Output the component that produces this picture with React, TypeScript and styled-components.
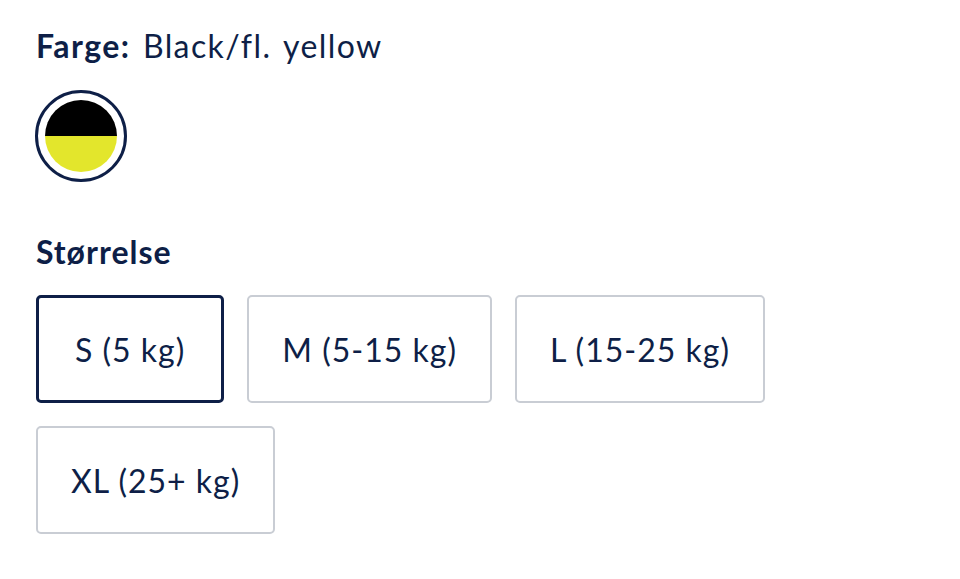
import React, { useState } from 'react'
import styled, { createGlobalStyle } from 'styled-components'

const GlobalStyle = createGlobalStyle`
  html, body {
    margin: 0;
    padding: 0;
    background: #ffffff;
  }

  body {
    font-family: Lato, "Open Sans", sans-serif;
    color: #0e1f47;
  }
`

const Page = styled.div`
  display: flex;
  flex-direction: column;
  padding: 26px 36px 0;
`

const Label = styled.div`
  font-size: 32px;
  letter-spacing: 1.4px;
  line-height: 40px;
  margin: 0;
  word-spacing: 3px;
`

const LabelKey = styled.span`
  font-weight: 700;
`

const Swatches = styled.div`
  display: flex;
  gap: 12px;
  margin-top: 24px;
`

const Swatch = styled.button<{ $selected: boolean; $top: string; $bottom: string }>`
  background: #ffffff;
  border: 3px solid ${props => (props.$selected ? '#0e1f47' : 'transparent')};
  border-radius: 50%;
  cursor: pointer;
  display: flex;
  height: 92px;
  margin-left: -1px;
  padding: 7px;
  width: 92px;

  &::before {
    background: linear-gradient(${props => props.$top} 50%, ${props => props.$bottom} 50%);
    border-radius: 50%;
    content: '';
    display: block;
    flex: 1;
  }
`

const SizeTitle = styled(Label)`
  font-weight: 700;
  letter-spacing: 1px;
  margin-top: 50px;
  word-spacing: normal;
`

const SizeGrid = styled.div`
  display: flex;
  flex-wrap: wrap;
  gap: 23px;
  margin-top: 23px;
  max-width: 760px;
`

const SizeButton = styled.button<{ $selected: boolean }>`
  background: #ffffff;
  border: ${props => (props.$selected ? '3px solid #0e1f47' : '2px solid #c9cdd4')};
  border-radius: 5px;
  color: #0e1f47;
  cursor: pointer;
  font-family: inherit;
  font-size: 32px;
  height: 108px;
  letter-spacing: 1px;
  padding: 0 ${props => (props.$selected ? '36px' : '33px')};
`

const sizes = ['S (5 kg)', 'M (5-15 kg)', 'L (15-25 kg)', 'XL (25+ kg)']

const App = () => {
  const [size, setSize] = useState(sizes[0])

  return (
    <>
      <GlobalStyle />
      <Page>
        <Label>
          <LabelKey>Farge:</LabelKey> Black/fl. yellow
        </Label>
        <Swatches>
          <Swatch $selected $top="#000000" $bottom="#e3e62c" aria-label="Black/fl. yellow" />
        </Swatches>
        <SizeTitle>Størrelse</SizeTitle>
        <SizeGrid>
          {sizes.map(s => (
            <SizeButton key={s} $selected={s === size} onClick={() => setSize(s)}>
              {s}
            </SizeButton>
          ))}
        </SizeGrid>
      </Page>
    </>
  )
}

export default App
